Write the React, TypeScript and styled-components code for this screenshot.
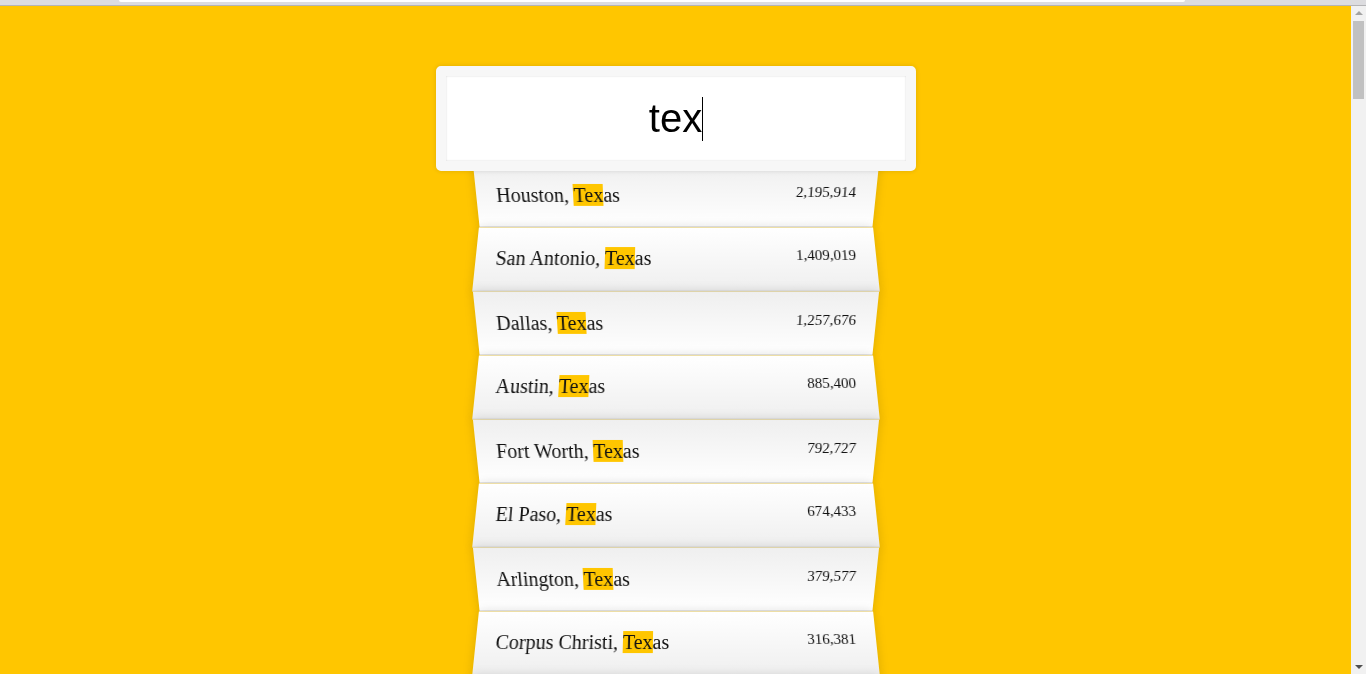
import React, { useState } from 'react';
import styled, { createGlobalStyle, css } from 'styled-components';

interface City {
  city: string;
  state: string;
  population: string;
}

const cities: City[] = [
  { city: 'Houston', state: 'Texas', population: '2195914' },
  { city: 'San Antonio', state: 'Texas', population: '1409019' },
  { city: 'Dallas', state: 'Texas', population: '1257676' },
  { city: 'Austin', state: 'Texas', population: '885400' },
  { city: 'Fort Worth', state: 'Texas', population: '792727' },
  { city: 'El Paso', state: 'Texas', population: '674433' },
  { city: 'Arlington', state: 'Texas', population: '379577' },
  { city: 'Corpus Christi', state: 'Texas', population: '316381' },
  { city: 'Plano', state: 'Texas', population: '274409' },
  { city: 'Laredo', state: 'Texas', population: '248142' },
];

const numberWithCommas = (x: string) => x.replace(/\B(?=(\d{3})+(?!\d))/g, ',');

// wrap the matched part of a place name in a highlight
const highlight = (text: string, query: string) => {
  if (!query) return text;
  const regex = new RegExp(`(${query})`, 'gi');
  return text.split(regex).map((part, i) =>
    part.toLowerCase() === query.toLowerCase() ? <Hl key={i}>{part}</Hl> : part
  );
};

const App: React.FC = () => {
  const [query, setQuery] = useState('tex');

  const matches = cities.filter(place => {
    const regex = new RegExp(query, 'gi');
    return place.city.match(regex) || place.state.match(regex);
  });

  return (
    <>
      <GlobalStyle />
      <Frame>
        <TopChrome>
          <AddressBar />
        </TopChrome>
        <Body>
          <Page>
            <SearchForm onSubmit={e => e.preventDefault()}>
              <InputWrap>
                <SearchInput
                  type="text"
                  value={query}
                  autoFocus
                  onChange={e => setQuery(e.target.value)}
                />
                {/* static caret so the focused state shows in a still picture */}
                <CaretLayer>
                  <Ghost>
                    {query}
                    <Caret />
                  </Ghost>
                </CaretLayer>
              </InputWrap>
              <Suggestions>
                {matches.map((place, i) => (
                  <Suggestion key={place.city} $even={i % 2 === 1}>
                    <span>
                      {highlight(place.city, query)}, {highlight(place.state, query)}
                    </span>
                    <Population>{numberWithCommas(place.population)}</Population>
                  </Suggestion>
                ))}
              </Suggestions>
            </SearchForm>
          </Page>
          <Scrollbar>
            <Arrow $up />
            <Thumb />
            <Track />
            <Arrow />
          </Scrollbar>
        </Body>
      </Frame>
    </>
  );
};

const GlobalStyle = createGlobalStyle`
  html {
    box-sizing: border-box;
    background: #ffc600;
  }
  *, *::before, *::after {
    box-sizing: inherit;
  }
  body {
    margin: 0;
    overflow: hidden;
  }
`;

const Frame = styled.div`
  display: flex;
  flex-direction: column;
  height: 100vh;
`;

const TopChrome = styled.div`
  height: 6px;
  flex-shrink: 0;
  background: #dcdcdf;
  border-bottom: 1px solid #b4b4b6;
  padding: 0 181px 0 119px;
`;

const AddressBar = styled.div`
  height: 2px;
  background: #ffffff;
  border-radius: 0 0 3px 3px;
`;

const Body = styled.div`
  flex: 1;
  display: flex;
  min-height: 0;
`;

const Page = styled.div`
  flex: 1;
  overflow: hidden;
  background: #ffc600;
  font-family: 'Liberation Serif', 'Times New Roman', serif;
  font-size: 20px;
  font-weight: 200;
`;

const SearchForm = styled.form`
  max-width: 400px;
  margin: 50px auto;
`;

const InputWrap = styled.div`
  width: 120%;
  left: -10%;
  position: relative;
  top: 10px;
  z-index: 2;
`;

const SearchInput = styled.input`
  display: block;
  width: 100%;
  margin: 0;
  padding: 20px;
  text-align: center;
  outline: 0;
  border: 10px solid #f7f7f7;
  border-radius: 5px;
  font-family: 'Liberation Sans', Arial, sans-serif;
  font-size: 40px;
  color: #000;
  caret-color: transparent;
  background: #fff;
  box-shadow: 0 0 5px rgba(0, 0, 0, 0.12), inset 0 0 2px rgba(0, 0, 0, 0.19);
`;

const CaretLayer = styled.div`
  position: absolute;
  inset: 0;
  display: flex;
  justify-content: center;
  align-items: center;
  pointer-events: none;
`;

const Ghost = styled.span`
  position: relative;
  font-family: 'Liberation Sans', Arial, sans-serif;
  font-size: 40px;
  color: transparent;
  white-space: pre;
`;

const Caret = styled.span`
  position: absolute;
  right: -1px;
  top: 50%;
  width: 1px;
  height: 44px;
  margin-top: -22px;
  background: #000;
`;

const Suggestions = styled.ul`
  margin: 0;
  padding: 0;
  position: relative;
`;

const Suggestion = styled.li<{ $even: boolean }>`
  list-style: none;
  border-bottom: 1px solid #d8d8d8;
  box-shadow: 0 0 10px rgba(0, 0, 0, 0.14);
  margin: 0;
  padding: 20px;
  display: flex;
  justify-content: space-between;
  text-transform: capitalize;
  color: #111;
  ${p =>
    p.$even
      ? css`
          transform: perspective(100px) rotateX(3deg) translateY(2px) scale(1.001);
          background: linear-gradient(to bottom, #ffffff 0%, #efefef 100%);
        `
      : css`
          transform: perspective(100px) rotateX(-3deg) translateY(3px);
          background: linear-gradient(to top, #ffffff 0%, #efefef 100%);
        `}
`;

const Population = styled.span`
  font-size: 15px;
`;

const Hl = styled.span`
  background: #ffc600;
`;

const Scrollbar = styled.div`
  width: 15px;
  flex-shrink: 0;
  background: #f1f1f1;
  display: flex;
  flex-direction: column;
  align-items: center;
`;

const Arrow = styled.div<{ $up?: boolean }>`
  width: 0;
  height: 0;
  margin: 5px 0;
  border-left: 4px solid transparent;
  border-right: 4px solid transparent;
  ${p =>
    p.$up
      ? css`
          border-bottom: 4px solid #a3a3a3;
        `
      : css`
          border-top: 4px solid #505050;
        `}
`;

const Thumb = styled.div`
  width: 11px;
  height: 78px;
  margin-top: 1px;
  background: #c1c1c1;
`;

const Track = styled.div`
  flex: 1;
`;

export default App;
